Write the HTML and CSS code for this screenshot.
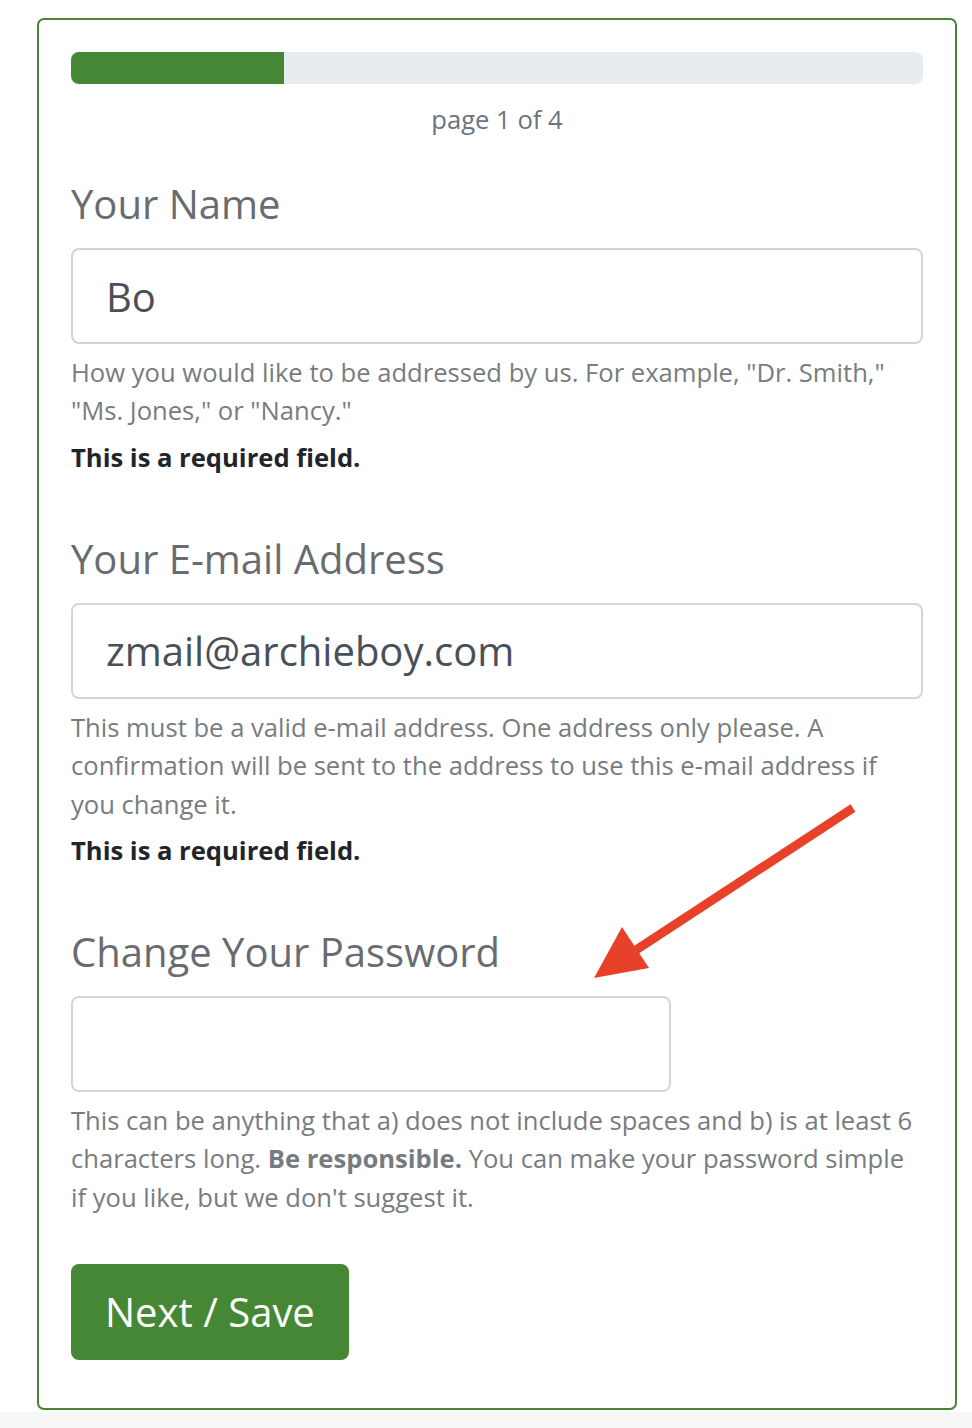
FILE: index.html
```html
<!DOCTYPE html>
<html lang="en">
<head>
<meta charset="utf-8">
<title>Profile</title>
<link rel="stylesheet" href="styles.css">
</head>
<body>
<div class="page">
  <form class="card">
    <div class="progress"><div class="progress-bar" style="width:25%"></div></div>
    <div class="page-label">page 1 of 4</div>

    <div class="field">
      <h2 class="label">Your Name</h2>
      <div class="input">Bo</div>
      <p class="help">How you would like to be addressed by us. For example, "Dr. Smith," "Ms. Jones," or "Nancy."</p>
      <p class="required">This is a required field.</p>
    </div>

    <div class="field">
      <h2 class="label">Your E-mail Address</h2>
      <div class="input">zmail@archieboy.com</div>
      <p class="help">This must be a valid e-mail address. One address only please. A confirmation will be sent to the address to use this e-mail address if you change it.</p>
      <p class="required">This is a required field.</p>
    </div>

    <div class="field field-password">
      <h2 class="label">Change Your Password</h2>
      <div class="input input-short"></div>
      <p class="help">This can be anything that a) does not include spaces and b) is at least 6 characters long. <strong class="help-strong">Be responsible.</strong> You can make your password simple if you like, but we don't suggest it.</p>
      <svg class="arrow" width="280" height="190" viewBox="0 0 280 190" aria-hidden="true">
        <line x1="262" y1="6" x2="45" y2="148" stroke="#e8412a" stroke-width="9"/>
        <polygon points="3,176 31,125 58,166" fill="#e8412a"/>
      </svg>
    </div>

    <button type="button" class="btn">Next / Save</button>
  </form>
</div>
</body>
</html>
```

FILE: styles.css
```css
* { box-sizing: border-box; }
html, body { margin: 0; padding: 0; }
body {
  font-family: "Open Sans", "Liberation Sans", sans-serif;
  background: #fff;
  color: #212529;
}
.page {
  padding: 18px 15px 0 37px;
  min-height: 1428px;
  background: linear-gradient(to bottom, #fff 1412px, #f7f7f8 1412px);
}
.card {
  position: relative;
  border: 2px solid #4a8238;
  border-radius: 7px;
  padding: 32px 32px 48px 32px;
  background: #fff;
}
.progress {
  height: 32px;
  background: #e9ecef;
  border-radius: 8px;
  overflow: hidden;
}
.progress-bar {
  height: 100%;
  background: #468735;
}
.page-label {
  margin-top: 17px;
  text-align: center;
  font-size: 25.6px;
  line-height: 38px;
  color: #6c757d;
}
.field { margin-top: 41px; position: relative; }
.field + .field { margin-top: 58px; }
.label {
  margin: 0 0 20px;
  font-size: 40px;
  line-height: 48px;
  font-weight: 400;
  color: #686c70;
}
.input {
  height: 96px;
  border: 2px solid #d2d5d9;
  border-radius: 8px;
  padding: 0 33px;
  display: flex;
  align-items: center;
  font-size: 40px;
  color: #495057;
  background: #fff;
}
.input-short { width: 600px; }
.help {
  margin: 10px 0 0;
  font-size: 25.6px;
  line-height: 38.4px;
  color: #787c80;
}
.help-strong { font-weight: 700; color: #777b7f; }
.required {
  margin: 8px 0 0;
  font-size: 25.6px;
  line-height: 38px;
  font-weight: 700;
  color: #212529;
}
.arrow {
  position: absolute;
  left: 520px;
  top: -126px;
}
.btn {
  display: block;
  margin-top: 47px;
  height: 96px;
  padding: 0 34px;
  border: none;
  border-radius: 8px;
  background: #468735;
  color: #fff;
  font-family: "Open Sans", "Liberation Sans", sans-serif;
  font-size: 40px;
  line-height: 1;
}
```
